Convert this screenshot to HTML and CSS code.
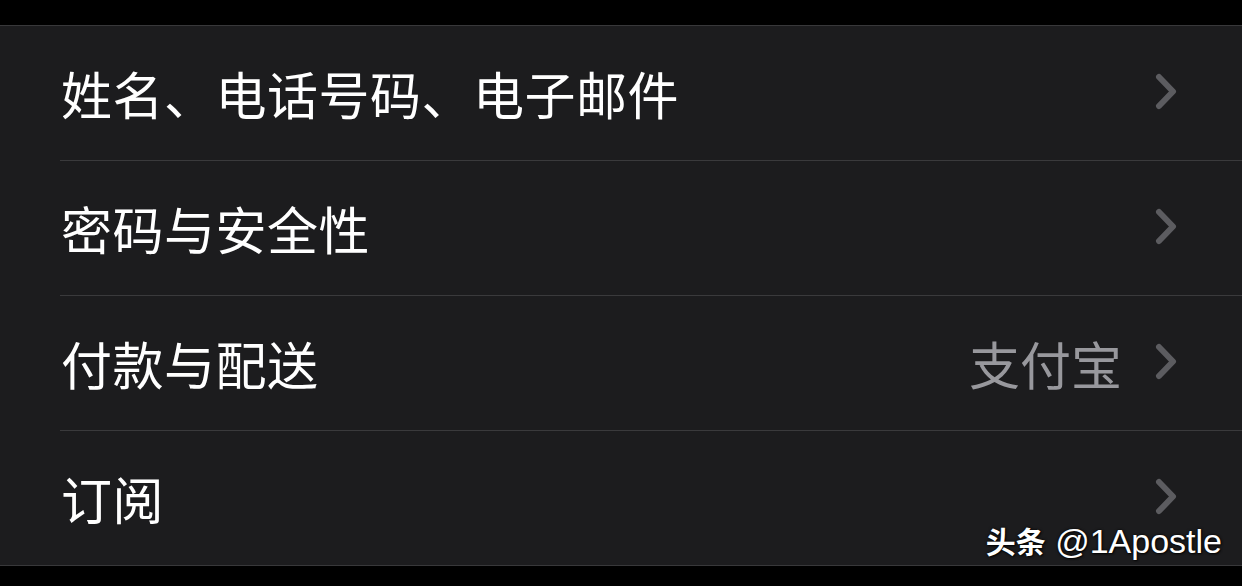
FILE: index.html
```html
<!DOCTYPE html>
<html lang="zh-CN">
<head>
    <meta charset="UTF-8">
    <meta name="viewport" content="width=device-width, initial-scale=1.0">
    <title>Apple ID</title>
    <link rel="stylesheet" href="styles.css">
</head>
<body>
    <div class="topbar"></div>
    <ul class="group">
        <li class="cell">
            <div class="cellInner">
                <span class="label">姓名、电话号码、电子邮件</span>
                <svg class="chevron" viewBox="0 0 22 37"><path d="M4 4 L18 18.5 L4 33"/></svg>
            </div>
        </li>
        <li class="cell">
            <div class="cellInner">
                <span class="label">密码与安全性</span>
                <svg class="chevron" viewBox="0 0 22 37"><path d="M4 4 L18 18.5 L4 33"/></svg>
            </div>
        </li>
        <li class="cell">
            <div class="cellInner">
                <span class="label">付款与配送</span>
                <span class="value">支付宝</span>
                <svg class="chevron" viewBox="0 0 22 37"><path d="M4 4 L18 18.5 L4 33"/></svg>
            </div>
        </li>
        <li class="cell">
            <div class="cellInner">
                <span class="label">订阅</span>
                <svg class="chevron" viewBox="0 0 22 37"><path d="M4 4 L18 18.5 L4 33"/></svg>
            </div>
        </li>
    </ul>
    <div class="mark"><b>头条</b> @1Apostle</div>
</body>
</html>
```

FILE: styles.css
```css
html, body {
    margin: 0;
    padding: 0;
    background: #000000;
    font-family: "Noto Sans CJK SC", "Noto Sans", sans-serif;
}
body {
    width: 1242px;
    height: 586px;
    overflow: hidden;
    position: relative;
}
.topbar {
    height: 25px;
    background: #000000;
}
.group {
    list-style: none;
    margin: 0;
    padding: 0;
    background: #1c1c1e;
    border-top: 1px solid #38383a;
    border-bottom: 1px solid #38383a;
}
.cell {
    padding-left: 60px;
    height: 135px;
}
.cell:last-child {
    height: 134px;
}
.cellInner {
    height: 100%;
    box-sizing: border-box;
    display: flex;
    align-items: center;
    padding-left: 1px;
    padding-right: 65px;
    border-bottom: 1px solid #3a3a3c;
}
.cell:last-child .cellInner {
    border-bottom: none;
}
.label {
    flex: 1;
    color: #ffffff;
    font-size: 51px;
    line-height: 1;
    letter-spacing: 0.5px;
}
.value {
    color: #98989d;
    font-size: 51px;
    line-height: 1;
    margin-right: 33px;
}
.chevron {
    width: 22px;
    height: 37px;
    margin-top: -4px;
}
.chevron path {
    fill: none;
    stroke: #5c5c60;
    stroke-width: 6;
    stroke-linecap: round;
    stroke-linejoin: round;
}
.mark {
    position: absolute;
    right: 20px;
    top: 524px;
    color: #ffffff;
    font-family: "Liberation Sans", "Noto Sans CJK SC", sans-serif;
    font-size: 34px;
    line-height: 1;
    text-shadow: 0 0 3px rgba(0, 0, 0, 0.9), 1px 1px 2px rgba(0, 0, 0, 0.8);
}
.mark b {
    font-family: "Noto Sans CJK SC", sans-serif;
    font-size: 30px;
    font-weight: 700;
}
```
